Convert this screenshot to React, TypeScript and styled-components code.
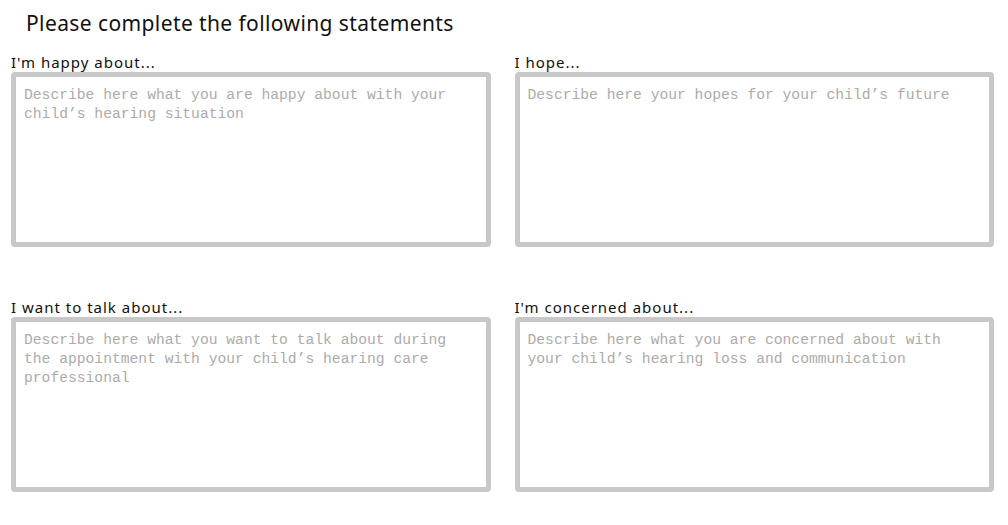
import React from "react";
import styled, { createGlobalStyle } from "styled-components";

const GlobalStyle = createGlobalStyle`
  html, body {
    margin: 0;
    padding: 0;
    background: #ffffff;
  }
  body {
    font-family: "Noto Sans", "Open Sans", sans-serif;
    color: #111111;
  }
  * { box-sizing: border-box; }
`;

const Page = styled.div`
  width: 1008px;
  padding: 10px 14px 0 11px;
`;

const Heading = styled.h1`
  margin: 0 0 17px 15px;
  font-family: "Noto Sans", sans-serif;
  font-weight: 400;
  font-size: 21px;
  line-height: 26px;
  letter-spacing: 0.4px;
  color: #111111;
`;

const Grid = styled.div`
  display: grid;
  grid-template-columns: 1fr 1fr;
  column-gap: 24px;
  row-gap: 51px;
`;

const Field = styled.label`
  display: flex;
  flex-direction: column;
`;

const LabelText = styled.span`
  font-family: "Noto Sans", sans-serif;
  font-size: 15px;
  line-height: 18px;
  letter-spacing: 1px;
  margin-bottom: 1px;
  color: #111111;
`;

const Area = styled.textarea`
  display: block;
  width: 100%;
  height: 175px;
  margin: 0;
  padding: 9px 8px 7px;
  border: 5px solid #c8c8c8;
  border-radius: 4px;
  background: #ffffff;
  resize: none;
  outline: none;
  font-family: "Liberation Mono", "DejaVu Sans Mono", monospace;
  font-size: 14.67px;
  line-height: 19px;
  color: #333333;

  &::placeholder {
    color: #ababab;
    opacity: 1;
  }
`;

const fields = [
  {
    label: "I'm happy about...",
    placeholder: "Describe here what you are happy about with your child’s hearing situation",
  },
  {
    label: "I hope...",
    placeholder: "Describe here your hopes for your child’s future",
  },
  {
    label: "I want to talk about...",
    placeholder:
      "Describe here what you want to talk about during the appointment with your child’s hearing care professional",
  },
  {
    label: "I'm concerned about...",
    placeholder:
      "Describe here what you are concerned about with your child’s hearing loss and communication",
  },
];

export default function App() {
  return (
    <>
      <GlobalStyle />
      <Page>
        <Heading>Please complete the following statements</Heading>
        <Grid>
          {fields.map((f) => (
            <Field key={f.label}>
              <LabelText>{f.label}</LabelText>
              <Area placeholder={f.placeholder} />
            </Field>
          ))}
        </Grid>
      </Page>
    </>
  );
}
